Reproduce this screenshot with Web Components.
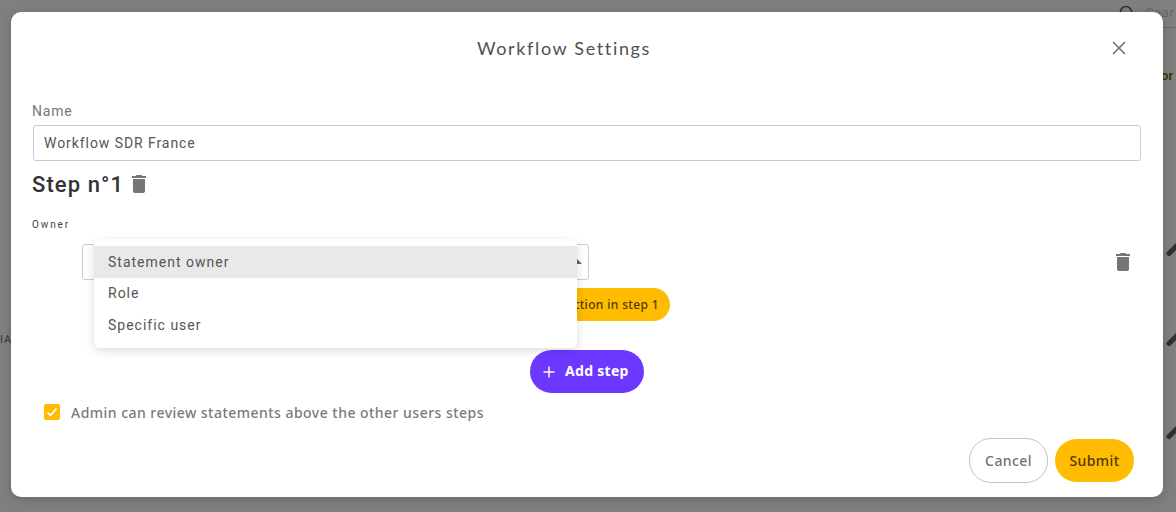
<!DOCTYPE html>
<html>
<head>
<meta charset="utf-8">
<style>
  html, body { margin: 0; height: 100%; }
  body { background: #7f7f7f; overflow: hidden; font-family: Roboto, sans-serif; }
</style>
</head>
<body>
<page-backdrop></page-backdrop>
<settings-dialog>
  <span slot="title">Workflow Settings</span>
  <text-field label="Name" value="Workflow SDR France"></text-field>
  <step-block></step-block>
  <add-button>Add step</add-button>
  <check-row>Admin can review statements above the other users steps</check-row>
</settings-dialog>
<script>
const trashIcon = size => `<svg width="${size}" height="${size}" viewBox="0 0 24 24" fill="#757575"><path d="M6 19c0 1.1.9 2 2 2h8c1.1 0 2-.9 2-2V7H6v12zM19 4h-3.5l-1-1h-5l-1 1H5v2h14V4z"/></svg>`;

// what shows of the page behind the dialog
class PageBackdrop extends HTMLElement {
    connectedCallback() {
        this.attachShadow({ mode: 'open' }).innerHTML = `
            <style>
                :host { position: absolute; inset: 0; display: block; overflow: hidden; color: #3a3a3a; font-size: 13px; }
                span { position: absolute; }
                .rule { position: absolute; left: 1112px; right: 0; top: 27px; height: 1px; background: #6a6a6a; }
                .pen { position: absolute; left: 1165px; width: 16px; height: 5px; border-radius: 2px; background: #303030; transform: rotate(-45deg); }
                svg { position: absolute; left: 1118px; top: 4px; }
            </style>
            <svg width="18" height="18" viewBox="0 0 18 18" fill="none" stroke="#333" stroke-width="1.6"><circle cx="8" cy="8" r="5.5"/><path d="M12 12l4 4"/></svg>
            <span style="left:1146px;top:5px;color:#666;letter-spacing:.6px">Sear</span>
            <div class="rule"></div>
            <span style="left:1161px;top:68px;color:#3a2c00;font-weight:500">or</span>
            <span style="left:0;top:333px;font-size:11px;letter-spacing:1px">IA</span>
            <div class="pen" style="top:247px"></div>
            <div class="pen" style="top:337px"></div>
            <div class="pen" style="top:430px"></div>
        `;
    }
}

class SettingsDialog extends HTMLElement {
    connectedCallback() {
        this.attachShadow({ mode: 'open' }).innerHTML = `
            <style>
                :host {
                    position: absolute; left: 11px; top: 12px; width: 1152px; height: 485px;
                    display: flex; flex-direction: column; box-sizing: border-box;
                    background: #fff; border-radius: 10px; padding: 0 22px 14px 22px;
                    box-shadow: 0 2px 10px rgba(0,0,0,0.2);
                }
                header { height: 90px; display: flex; justify-content: center; position: relative; flex: none; }
                h2 { margin: 25px 46px 0 0; font: 400 18px/22px Lato, sans-serif; letter-spacing: 1.65px; color: #505050; }
                button.close { position: absolute; right: 12px; top: 26px; width: 20px; height: 20px; padding: 0; border: 0; background: none; }
                main { flex: 1; display: flex; flex-direction: column; }
                footer { display: flex; justify-content: flex-end; gap: 7px; padding-right: 7px; flex: none; }
                .btn { height: 43px; width: 79px; box-sizing: border-box; border-radius: 22px; font: 500 14px "Noto Sans", sans-serif; letter-spacing: 0.4px; display: flex; align-items: center; justify-content: center; }
                .cancel { border: 1px solid #c4c4c4; color: #6f7078; background: #fff; height: 45px; margin-top: -1px; }
                .submit { background: #ffbc00; color: #4f3b00; }
            </style>
            <header>
                <h2><slot name="title"></slot></h2>
                <button class="close" aria-label="Close"><svg width="20" height="20" viewBox="0 0 20 20" fill="none" stroke="#6f6f6f" stroke-width="1.6"><path d="M4 4l12 12M16 4L4 16"/></svg></button>
            </header>
            <main><slot></slot></main>
            <footer>
                <div class="btn cancel">Cancel</div>
                <div class="btn submit">Submit</div>
            </footer>
        `;
    }
}

class TextField extends HTMLElement {
    connectedCallback() {
        this.attachShadow({ mode: 'open' }).innerHTML = `
            <style>
                :host { display: block; }
                label { display: block; font: 400 14px/18px Roboto, sans-serif; letter-spacing: 0.8px; color: #777; margin: 0 0 5px -1px; }
                .box { height: 36px; box-sizing: border-box; border: 1px solid #c7cbd6; border-radius: 3px; padding: 0 10px; display: flex; align-items: center; font: 400 14px Roboto, sans-serif; letter-spacing: 0.93px; color: #555; }
            </style>
            <label>${this.getAttribute('label')}</label>
            <div class="box">${this.getAttribute('value')}</div>
        `;
    }
}

class StepBlock extends HTMLElement {
    connectedCallback() {
        this.attachShadow({ mode: 'open' }).innerHTML = `
            <style>
                :host { display: block; position: relative; height: 173px; }
                .head { display: flex; align-items: center; gap: 3px; height: 46px; margin-left: -1px; }
                h3 { margin: 0; font: 500 22px Roboto, sans-serif; letter-spacing: 1.1px; color: #333; }
                .head svg { display: block; }
                .owner { font: 400 10px/12px Roboto, sans-serif; letter-spacing: 1.9px; color: #444; margin: 12px 0 0 -1px; }
                .row { display: flex; margin-top: 13px; }
                .select { position: relative; width: 507px; height: 36px; margin-left: 49px; box-sizing: border-box; border: 1px solid #c7cbd6; border-radius: 3px; }
                .arrow { position: absolute; right: 6px; top: 14px; width: 0; height: 0; border-left: 5px solid transparent; border-right: 5px solid transparent; border-bottom: 5px solid #666; }
                .trash { position: absolute; left: 1078px; top: 89px; }
                .action { position: absolute; right: 471px; top: 127px; height: 33px; padding: 0 11px 0 60px; background: #ffbc00; border-radius: 17px; box-sizing: border-box; font: 500 12px/33px "Noto Sans", sans-serif; letter-spacing: 0.35px; color: #4f3b00; white-space: nowrap; }
            </style>
            <div class="head"><h3>Step n°1</h3>${trashIcon(24)}</div>
            <div class="owner">Owner</div>
            <div class="row"><div class="select"><div class="arrow"></div></div></div>
            <div class="trash">${trashIcon(24)}</div>
            <div class="action">Add action in step 1</div>
            <option-menu></option-menu>
        `;
    }
}

// open dropdown, lies over the select and the yellow pill
class OptionMenu extends HTMLElement {
    connectedCallback() {
        this.attachShadow({ mode: 'open' }).innerHTML = `
            <style>
                :host {
                    position: absolute; left: 61px; top: 78px; width: 483px; height: 109px;
                    display: block; background: #fff; border-radius: 6px; padding: 7px 0;
                    box-sizing: border-box; z-index: 2;
                    box-shadow: 0 3px 10px rgba(0,0,0,0.14);
                    font: 400 14px Roboto, sans-serif; letter-spacing: 1px; color: #555;
                }
                div { height: 32px; line-height: 32px; padding-left: 14px; }
                .on { background: #e9e9e9; }
                .role { height: 31px; line-height: 31px; }
            </style>
            <div class="on">Statement owner</div>
            <div class="role">Role</div>
            <div>Specific user</div>
        `;
    }
}

class AddButton extends HTMLElement {
    connectedCallback() {
        this.attachShadow({ mode: 'open' }).innerHTML = `
            <style>
                :host {
                    align-self: flex-start; margin: 16px 0 0 497px; height: 43px; width: 114px; box-sizing: border-box;
                    display: flex; align-items: center; gap: 10px; padding-left: 13px;
                    background: #6c38ff; color: #fff; border-radius: 22px;
                    font: 700 14px "Noto Sans", sans-serif; letter-spacing: 0.3px;
                }
                span { margin-top: -2px; }
            </style>
            <svg width="12" height="12" viewBox="0 0 12 12" stroke="#fff" stroke-width="1.5"><path d="M6 0.5v11M0.5 6h11"/></svg>
            <span><slot></slot></span>
        `;
    }
}

class CheckRow extends HTMLElement {
    connectedCallback() {
        this.attachShadow({ mode: 'open' }).innerHTML = `
            <style>
                :host { display: flex; align-items: center; gap: 11px; margin: 9px 0 0 11px; height: 20px; font: 500 14px "Noto Sans", sans-serif; letter-spacing: 0.47px; color: #7a7a7a; }
                .box { width: 16px; height: 16px; background: #ffbc00; border-radius: 2px; display: flex; align-items: center; justify-content: center; }
            </style>
            <div class="box"><svg width="12" height="12" viewBox="0 0 12 12" fill="none" stroke="#fff" stroke-width="1.7"><path d="M1.5 6.5l3 3 6-7"/></svg></div>
            <slot></slot>
        `;
    }
}

customElements.define('page-backdrop', PageBackdrop);
customElements.define('settings-dialog', SettingsDialog);
customElements.define('text-field', TextField);
customElements.define('step-block', StepBlock);
customElements.define('option-menu', OptionMenu);
customElements.define('add-button', AddButton);
customElements.define('check-row', CheckRow);
</script>
</body>
</html>
